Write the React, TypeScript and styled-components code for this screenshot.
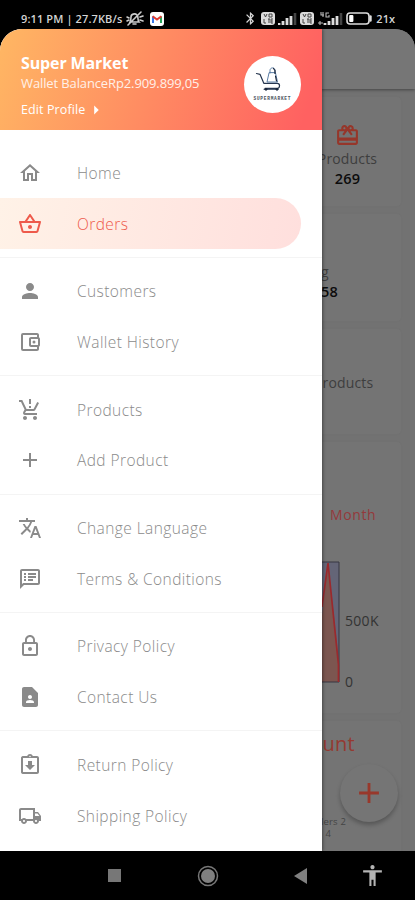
import React from 'react';
import type { IconType } from 'react-icons';
import styled, { createGlobalStyle } from 'styled-components';
import {
  MdOutlineHome, MdOutlineShoppingBasket, MdPerson, MdOutlineAccountBalanceWallet,
  MdOutlineProductionQuantityLimits, MdAdd, MdTranslate, MdOutlineSpeakerNotes,
  MdLockOutline, MdContactPage, MdOutlineAssignmentReturned, MdOutlineLocalShipping,
  MdRedeem, MdAccessibility, MdArrowRight, MdBluetooth,
} from 'react-icons/md';

const GlobalStyle = createGlobalStyle`
  * { box-sizing: border-box; }
  body { margin: 0; background: #000; font-family: "Open Sans", "Noto Sans", sans-serif; }
`;

const Phone = styled.div`
  width: 415px;
  height: 900px;
  display: flex;
  flex-direction: column;
  background: #000;
  overflow: hidden;
`;

const StatusBar = styled.div`
  height: 29px;
  flex: none;
  display: flex;
  align-items: center;
  padding: 8px 20px 0 21px;
  color: #d4d4d4;
  font: 600 11px/20px "Open Sans", sans-serif;
`;
const Clock = styled.span`
  width: 105px;
  white-space: nowrap;
  letter-spacing: 0.12px;
`;
const StatusIcons = styled.div`
  margin-left: auto;
  display: flex;
  align-items: center;
  gap: 3px;
`;
const Percent = styled.span`
  font-size: 11px;
`;

const Screen = styled.div`
  position: relative;
  height: 822px;
  flex: none;
  border-radius: 22px 20px 0 0;
  overflow: hidden;
  background: #727272;
`;

const Dashboard = styled.div`
  height: 100%;
  padding-left: 310px;
  display: flex;
  flex-direction: column;
`;
const AppBar = styled.div`
  height: 60px;
  flex: none;
  margin-left: -310px;
  background: #767676;
  box-shadow: 0 1px 3px rgba(0, 0, 0, 0.4);
`;
const StatCard = styled.div<{ $height: number; $top: number; $left?: number }>`
  height: ${(p) => p.$height}px;
  flex: none;
  width: 91px;
  margin-top: 8px;
  padding: ${(p) => p.$top}px 0 0 ${(p) => p.$left ?? 0}px;
  background: #747474;
  border-radius: 4px;
  box-shadow: 0 0 3px rgba(0, 0, 0, 0.03);
  color: #3e3e3e;
  font-size: 14px;
  line-height: 21px;
  letter-spacing: 0.15px;
  white-space: nowrap;
`;
const Stack = styled.div`
  width: 75px;
  display: flex;
  flex-direction: column;
  align-items: center;
`;
const Figure = styled.div`
  color: #0c0c0c;
  font-weight: 600;
  font-size: 14.5px;
  line-height: 20px;
`;
const Month = styled.div`
  padding-left: 20px;
  color: #94393b;
  font-size: 14px;
  line-height: 20px;
  letter-spacing: 0.6px;
`;
const ChartRow = styled.div`
  display: flex;
  align-items: flex-start;
  margin-top: 36px;
`;
const Axis = styled.div`
  height: 131px;
  margin-left: 5px;
  padding-top: 50px;
  display: flex;
  flex-direction: column;
  justify-content: space-between;
  color: #333;
  font-size: 14px;
  line-height: 20px;
  letter-spacing: 0.3px;
`;
const CountTitle = styled.div`
  color: #943a31;
  width: 45px;
  font-size: 20px;
  line-height: 26px;
  letter-spacing: 0.3px;
  display: flex;
  justify-content: flex-end;
`;
const Legend = styled.div`
  margin-top: 59px;
  width: 36px;
  font-size: 9.5px;
  line-height: 12px;
  color: #444;
  display: flex;
  flex-direction: column;
  align-items: flex-end;
`;
const LegendValue = styled.div`
  padding-right: 15px;
`;
const Fab = styled.div`
  position: absolute;
  right: 17px;
  top: 735px;
  width: 58px;
  height: 58px;
  border-radius: 50%;
  display: flex;
  align-items: center;
  justify-content: center;
  background: #757575;
  color: #98382b;
  box-shadow: 0 3px 4px rgba(0, 0, 0, 0.25);
`;

const Drawer = styled.aside`
  position: absolute;
  inset: 0 auto 0 0;
  width: 322px;
  background: #fff;
  box-shadow: 1px 0 3px rgba(0, 0, 0, 0.4);
`;
const Header = styled.header`
  height: 101px;
  padding: 23px 21px 0;
  display: flex;
  justify-content: space-between;
  color: #fff;
  background: linear-gradient(108deg, #ffb763 0%, #ff6161 94%);
`;
const Store = styled.div`
  font-size: 16px;
  line-height: 22px;
  font-weight: 700;
  letter-spacing: -0.12px;
`;
const Balance = styled.div`
  font-size: 13px;
  line-height: 18px;
  letter-spacing: -0.12px;
  color: #fff0e8;
  white-space: nowrap;
`;
const Edit = styled.div`
  margin-top: 7px;
  font-size: 12.5px;
  line-height: 18px;
  letter-spacing: 0.1px;
  display: flex;
  align-items: center;
`;
const Avatar = styled.div`
  margin-top: 4px;
  width: 57px;
  height: 57px;
  border-radius: 50%;
  background: #fff;
`;
const Menu = styled.nav`
  padding-top: 17.4px;
`;
const Group = styled.div`
  & + & {
    border-top: 1px solid #f4f4f4;
    margin-top: 7.7px;
    padding-top: 8px;
  }
`;
const Item = styled.div<{ $active?: boolean }>`
  height: 50.85px;
  width: 301px;
  padding-left: 18px;
  display: flex;
  align-items: center;
  gap: 35px;
  border-radius: 0 26px 26px 0;
  background: ${(p) => (p.$active ? 'linear-gradient(100deg, #fff2e7, #ffdfdd)' : 'none')};
  color: ${(p) => (p.$active ? '#ee5a4b' : '#8a8a8a')};
`;
const Label = styled.span`
  font-size: 15.5px;
  line-height: 22px;
  font-weight: 300;
  letter-spacing: 0.42px;
  white-space: nowrap;
`;

const NavBar = styled.div`
  height: 49px;
  display: grid;
  grid-template-columns: 94px 94px 90px 54px;
  justify-items: center;
  align-items: center;
  padding-left: 67px;
  color: #b4b4b4;
`;

type MenuEntry = { label: string; Icon: IconType; active?: boolean };

const groups: MenuEntry[][] = [
  [{ label: 'Home', Icon: MdOutlineHome }, { label: 'Orders', Icon: MdOutlineShoppingBasket, active: true }],
  [{ label: 'Customers', Icon: MdPerson }, { label: 'Wallet History', Icon: MdOutlineAccountBalanceWallet }],
  [{ label: 'Products', Icon: MdOutlineProductionQuantityLimits }, { label: 'Add Product', Icon: MdAdd }],
  [{ label: 'Change Language', Icon: MdTranslate }, { label: 'Terms & Conditions', Icon: MdOutlineSpeakerNotes }],
  [{ label: 'Privacy Policy', Icon: MdLockOutline }, { label: 'Contact Us', Icon: MdContactPage }],
  [{ label: 'Return Policy', Icon: MdOutlineAssignmentReturned }, { label: 'Shipping Policy', Icon: MdOutlineLocalShipping }],
];

const VoLte = () => (
  <svg width="14" height="13" viewBox="0 0 14 13">
    <rect width="14" height="13" rx="3" fill="#ddd" />
    <path d="M3 2l1.500 3L6 2M8 2h3v3H8zM3 7v4h2M7 7h2M8 7v4M12 7h-2v4h2M10 9h2" stroke="#444" fill="none" />
  </svg>
);

const Signal = ({ lte = false }: { lte?: boolean }) => (
  <svg width={lte ? 26 : 19} height="14" viewBox={lte ? '-7 0 26 14' : '0 0 19 14'}>
    <path d="M1 13v-2M5 13V9M9 13V6M13 13V4" stroke="#ddd" strokeWidth="2.8" />
    <path d="M17 13V1" stroke="#444" strokeWidth="2.6" />
    {lte && <path d="M-6 11h5M-4 9v4M-3 0v3h3M-1 0v5M5 1H2v4h3V3" stroke="#bbb" strokeWidth="1.1" fill="none" />}
  </svg>
);

const Battery = () => (
  <svg width="27" height="13" viewBox="0 0 27 13">
    <rect x="1" y="1" width="22" height="11" rx="3" fill="none" stroke="#ddd" strokeWidth="1.6" />
    <path d="M24.500 4.500v4" stroke="#ddd" strokeWidth="2.4" strokeLinecap="round" />
    <rect x="3.200" y="3" width="4.200" height="7" rx="1" fill="#fff" />
  </svg>
);

const Muted = () => (
  <svg width="18" height="15" viewBox="0 0 18 15" fill="none" stroke="#ccc" strokeWidth="1.6" strokeLinecap="round">
    <path d="M4 11h9c-2-2 0-5-2-7-2-2-6-1-6 2 0 2 0 3-1 5zM7 13h3M2 14L15 1M1 6l2 1M1 10l2-1M14 6l3-1M14 9l3 1" />
  </svg>
);

const Mail = () => (
  <svg width="14" height="14" viewBox="0 0 14 14">
    <rect width="14" height="14" rx="3" fill="#fff" />
    <path d="M3 11V4.500" stroke="#3978e8" strokeWidth="2" />
    <path d="M11 11V4.500" stroke="#29a55b" strokeWidth="2" />
    <path d="M2.600 4.200L7 7.600l4.400-3.400" stroke="#e13d32" strokeWidth="2" fill="none" />
  </svg>
);

const Alerts = styled.div`
  display: flex;
  align-items: center;
  gap: 6px;
`;

const LogoBrand = styled.text`
  font: 700 4.5px "Liberation Mono", monospace;
  fill: #4a525c;
`;
const Logo = () => (
  <svg width="57" height="57" viewBox="0 0 57 57" fill="none" strokeLinecap="round" strokeLinejoin="round">
    <path d="M12.500 17.500l3.500.8 3.800 9h13.500c3 0 3 5 0 5H21" stroke="#26364f" strokeWidth="1.200" />
    <path d="M25 17l-2 9h10.500l-2-9zM26 17v-2.500c0-3.500 5-3.500 5 0V17" stroke="#4a6f9b" strokeWidth="0.900" />
    <path d="M29.500 12.500l1.500 2v3M31.500 20l1 5" stroke="#182438" strokeWidth="1.200" />
    <path d="M20 33.300h14" stroke="#26364f" strokeWidth="1" />
    <circle cx="22" cy="33.300" r="1.400" fill="#18253a" />
    <circle cx="33" cy="33.300" r="1.400" fill="#18253a" />
    <LogoBrand x="9.500" y="43.800" textLength="37" lengthAdjust="spacing">SUPERMARKET</LogoBrand>
  </svg>
);

const Chart = () => (
  <svg width="30" height="122" viewBox="0 0 30 122">
    <rect x="0" y="1" width="29" height="120" fill="#646577" />
    <path d="M0 121V90h8L18 2l11 98v21z" fill="#7c5650" />
    <path d="M0 1h29v120H0" fill="none" stroke="#373743" />
    <path d="M12 46L18 2l10.500 102v17" fill="none" stroke="#9b292d" strokeWidth="1.700" />
  </svg>
);

export default function App() {
  return (
    <>
      <GlobalStyle />
      <Phone>
        <StatusBar>
          <Clock>9:11 PM | 27.7KB/s</Clock>
          <Alerts>
            <Muted />
            <Mail />
          </Alerts>
          <StatusIcons>
            <MdBluetooth size={15} />
            <VoLte />
            <Signal />
            <VoLte />
            <Signal lte />
            <Battery />
            <Percent>21x</Percent>
          </StatusIcons>
        </StatusBar>
        <Screen>
          <Dashboard>
            <AppBar />
            <StatCard $height={109} $top={26}>
              <Stack>
                <MdRedeem size={25} color="#96362a" />
                <span>Products</span>
                <Figure>269</Figure>
              </Stack>
            </StatCard>
            <StatCard $height={107} $top={47} $left={11}>
              <span>g</span>
              <Figure>58</Figure>
            </StatCard>
            <StatCard $height={105} $top={43} $left={4}>Products</StatCard>
            <StatCard $height={271} $top={63}>
              <Month>Month</Month>
              <ChartRow>
                <Chart />
                <Axis><span>500K</span><span>0</span></Axis>
              </ChartRow>
            </StatCard>
            <StatCard $height={150} $top={10}>
              <CountTitle>Count</CountTitle>
              <Legend>
                <div>Sellers 2</div>
                <LegendValue>4</LegendValue>
              </Legend>
            </StatCard>
          </Dashboard>
          <Fab><MdAdd size={34} /></Fab>
          <Drawer>
            <Header>
              <div>
                <Store>Super Market</Store>
                <Balance>Wallet BalanceRp2.909.899,05</Balance>
                <Edit>Edit Profile <MdArrowRight size={22} /></Edit>
              </div>
              <Avatar><Logo /></Avatar>
            </Header>
            <Menu>
              {groups.map((group) => (
                <Group key={group[0].label}>
                  {group.map(({ label, Icon, active }) => (
                    <Item key={label} $active={active}>
                      <Icon size={24} />
                      <Label>{label}</Label>
                    </Item>
                  ))}
                </Group>
              ))}
            </Menu>
          </Drawer>
        </Screen>
        <NavBar>
          <svg width="13" height="13"><rect width="13" height="13" fill="#777" /></svg>
          <svg width="22" height="22"><circle cx="11" cy="11" r="9.500" fill="none" stroke="#777" strokeWidth="1.500" /><circle cx="11" cy="11" r="7" fill="#808080" /></svg>
          <svg width="13" height="16"><path d="M13 0v16L0 8z" fill="#808080" /></svg>
          <MdAccessibility size={25} />
        </NavBar>
      </Phone>
    </>
  );
}
